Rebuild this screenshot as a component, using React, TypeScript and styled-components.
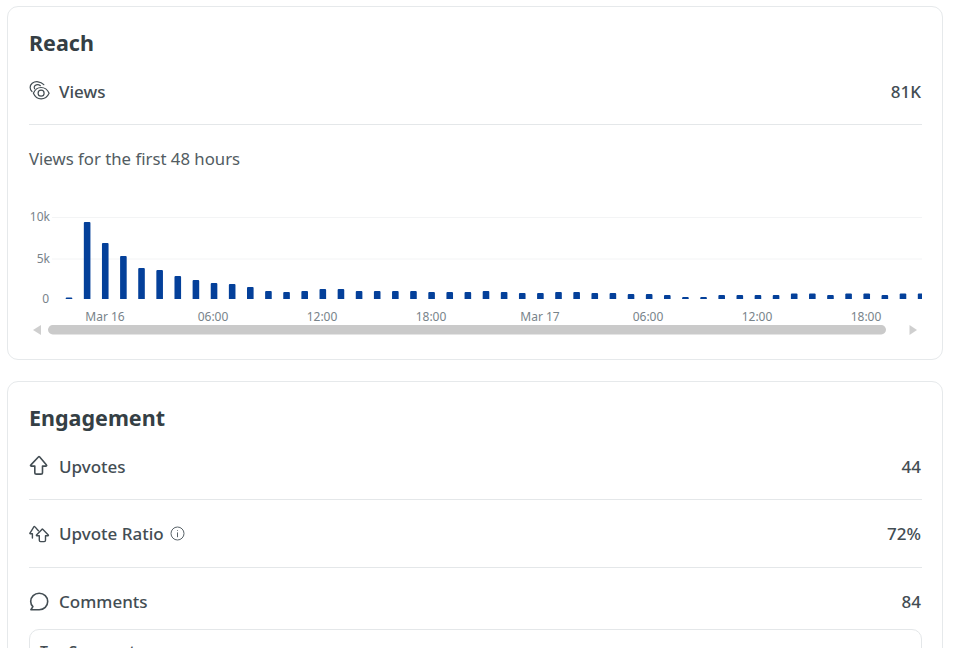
import React from "react";
import styled, { createGlobalStyle } from "styled-components";

const Global = createGlobalStyle`
  html, body { margin: 0; padding: 0; background: #fff; height: 648px; overflow: hidden; }
  body { font-family: "Noto Sans", "Open Sans", sans-serif; color: #3b454b; }
  * { box-sizing: border-box; }
`;

const Page = styled.div`
  display: flex;
  flex-direction: column;
  gap: 21px;
  padding: 6px 17px 0 7px;
  width: 960px;
  height: 648px;
  overflow: hidden;
`;

const Card = styled.section`
  flex: none;
  border: 1px solid #e6e9eb;
  border-radius: 11px;
  padding: 19px 20px 18px 21px;
  background: #fff;
`;

const Title = styled.h2`
  margin: 1px 0 -1px;
  font-size: 21.5px;
  line-height: 32px;
  font-weight: 700;
  color: #353f45;
`;

const Row = styled.div<{ $height: number; $divider?: boolean; $padTop?: number }>`
  display: flex;
  align-items: center;
  justify-content: space-between;
  height: ${(p) => p.$height}px;
  padding-top: ${(p) => p.$padTop ?? 0}px;
  border-bottom: ${(p) => (p.$divider ? "1px solid #e4e7e9" : "0")};
`;

const RowLabel = styled.div`
  display: flex;
  align-items: center;
  gap: 8px;
  font-size: 17px;
  font-weight: 500;
  color: #434d53;
`;

const RowValue = styled.div`
  padding-right: 1px;
  font-size: 17px;
  font-weight: 500;
  color: #434d53;
`;

const IconSlot = styled.span`
  display: inline-flex;
  width: 22px;
  height: 22px;
  flex: none;
  color: #434d53;
`;

const InfoSlot = styled.span`
  display: inline-flex;
  margin-left: -2px;
  color: #596369;
`;

const Subtitle = styled.p`
  margin: 0;
  padding-top: 22px;
  font-size: 16.75px;
  line-height: 24px;
  font-weight: 400;
  color: #525c62;
`;

const ChartWrap = styled.div`
  margin-top: 33px;
  height: 137px;
`;

const Chart = styled.svg`
  display: block;
  overflow: hidden;
`;

const Axis = styled.text`
  font-family: "Noto Sans", sans-serif;
  font-size: 12px;
  fill: #78838a;
`;

const CommentsBox = styled.div`
  border: 1px solid #e4e7e9;
  border-radius: 10px;
  padding: 11px 10px;
  height: 120px;
  font-size: 14px;
  font-weight: 600;
  line-height: 20px;
  color: #434d53;
`;

const heights = [1.5, 77, 56, 43, 31, 29, 23, 19, 16, 15, 12, 8, 7, 8, 10, 10, 8, 8, 8, 8, 7, 7, 7, 8, 7, 6, 6, 7, 7, 6, 6, 5, 5, 4, 2, 2, 4, 4, 4, 4, 5.5, 5.5, 4, 5.5, 5.5, 4, 5.5, 5.5];

const xLabels: [string, number][] = [
  ["Mar 16", 105],
  ["06:00", 213],
  ["12:00", 322],
  ["18:00", 431],
  ["Mar 17", 540],
  ["06:00", 648],
  ["12:00", 757],
  ["18:00", 866],
];

function ReachChart() {
  const ox = 29;
  const oy = 204;
  const base = 299 - oy;
  return (
    <Chart width={893} height={137} viewBox="0 0 893 137">
      <line x1={52 - ox} x2={922 - ox} y1={217.5 - oy} y2={217.5 - oy} stroke="#f3f4f5" />
      <line x1={52 - ox} x2={922 - ox} y1={259 - oy} y2={259 - oy} stroke="#f3f4f5" />
      <Axis x={50 - ox} y={221 - oy} textAnchor="end">10k</Axis>
      <Axis x={50 - ox} y={263 - oy} textAnchor="end">5k</Axis>
      <Axis x={49 - ox} y={303 - oy} textAnchor="end">0</Axis>
      <g>
        {heights.map((h, i) => {
          const cx = 69 + 18.13 * i - ox;
          const top = base - h;
          return (
            <path
              key={i}
              d={`M${cx - 3.3} ${base}V${top + 1}Q${cx - 3.3} ${top} ${cx - 2.3} ${top}H${cx + 2.3}Q${cx + 3.3} ${top} ${cx + 3.3} ${top + 1}V${base}Z`}
              fill="#04409a"
            />
          );
        })}
      </g>
      {xLabels.map(([t, x], i) => (
        <Axis key={i} x={x - ox} y={321 - oy} textAnchor="middle">{t}</Axis>
      ))}
      <path d={`M${33 - ox} ${330 - oy}L${41 - ox} ${325 - oy}V${335 - oy}Z`} fill="#cfcfcf" />
      <rect x={48 - ox} y={325 - oy} width={838} height={9.5} rx={4.75} fill="#cacaca" />
      <path d={`M${917 - ox} ${330 - oy}L${909.5 - ox} ${325 - oy}V${335 - oy}Z`} fill="#cfcfcf" />
    </Chart>
  );
}

const stroke = { fill: "none", stroke: "currentColor", strokeWidth: 1.5, strokeLinecap: "round" as const, strokeLinejoin: "round" as const };

const ViewsIcon = () => (
  <svg width="22" height="22" viewBox="0 0 22 22" {...stroke} strokeWidth={1.2}>
    <path d="M3 11.500C0.600 9.500 0.400 5.500 3.200 3.300 6.500 0.800 11.500 1.300 14.800 4.700" />
    <path d="M5.600 8.800C4.800 7.200 5.300 5.500 7.300 4.900 8.800 4.500 10.200 4.800 11.400 5.700" />
    <path d="M4.400 13.300C6 9.500 8.600 7.500 12.100 7.500c3.600 0 6.300 2 8 5.800-1.700 3.700-4.400 5.600-8 5.600-3.500 0-6.100-1.900-7.700-5.600Z" />
    <circle cx="12.100" cy="13.200" r="3" />
  </svg>
);

const UpIcon = () => (
  <svg width="22" height="22" viewBox="0 0 22 22" {...stroke} strokeWidth={1.6}>
    <path d="M9.600 1.800 1.700 10.100c-.4.400-.1 1 .4 1h3.700v6.300c0 1 .7 1.700 1.700 1.700h4.300c1 0 1.700-.7 1.700-1.700v-6.300h3.600c.5 0 .8-.6.400-1L10.500 1.800c-.3-.3-.7-.3-.9 0Z" />
  </svg>
);

const DoubleUpIcon = () => (
  <svg width="22" height="22" viewBox="0 0 22 22" {...stroke} strokeWidth={1.4}>
    <path d="M3.400 15V10.800H1.300c-.4 0-.6-.4-.3-.7L5 3.600c.2-.3.600-.3.800 0l3.600 4.100" />
    <path d="M13.100 6.200 7.500 12c-.3.300-.1.800.3.800h2.500v4.500c0 .8.500 1.300 1.300 1.300h3.600c.8 0 1.300-.5 1.300-1.300v-4.500h2.500c.4 0 .6-.5.300-.8l-5.600-5.800c-.2-.2-.5-.2-.6 0Z" />
  </svg>
);

const CommentIcon = () => (
  <svg width="22" height="22" viewBox="0 0 22 22" {...stroke} strokeWidth={1.6}>
    <path d="M10.200 2.300c4.800 0 8.500 3.600 8.500 8.200s-3.700 8.200-8.500 8.200H1.900l2-3.100C2.500 14.200 1.700 12.400 1.700 10.500c0-4.600 3.700-8.200 8.500-8.200Z" />
  </svg>
);

const InfoIcon = () => (
  <svg width="15" height="15" viewBox="0 0 15 15" fill="none" stroke="currentColor" strokeWidth="1">
    <circle cx="7.500" cy="7.500" r="6.500" />
    <path d="M7.500 6.800v4" strokeLinecap="round" />
    <circle cx="7.500" cy="4.600" r=".5" fill="currentColor" stroke="none" />
  </svg>
);

export default function App() {
  return (
    <>
      <Global />
      <Page>
        <Card>
          <Title>Reach</Title>
          <Row $height={67} $divider>
            <RowLabel><IconSlot><ViewsIcon /></IconSlot>Views</RowLabel>
            <RowValue>81K</RowValue>
          </Row>
          <Subtitle>Views for the first 48 hours</Subtitle>
          <ChartWrap><ReachChart /></ChartWrap>
        </Card>
        <Card>
          <Title>Engagement</Title>
          <Row $height={67} $divider>
            <RowLabel><IconSlot><UpIcon /></IconSlot>Upvotes</RowLabel>
            <RowValue>44</RowValue>
          </Row>
          <Row $height={68} $divider>
            <RowLabel><IconSlot><DoubleUpIcon /></IconSlot>Upvote Ratio<InfoSlot><InfoIcon /></InfoSlot></RowLabel>
            <RowValue>72%</RowValue>
          </Row>
          <Row $height={61} $padTop={6}>
            <RowLabel><IconSlot><CommentIcon /></IconSlot>Comments</RowLabel>
            <RowValue>84</RowValue>
          </Row>
          <CommentsBox>Top Comments</CommentsBox>
        </Card>
      </Page>
    </>
  );
}
